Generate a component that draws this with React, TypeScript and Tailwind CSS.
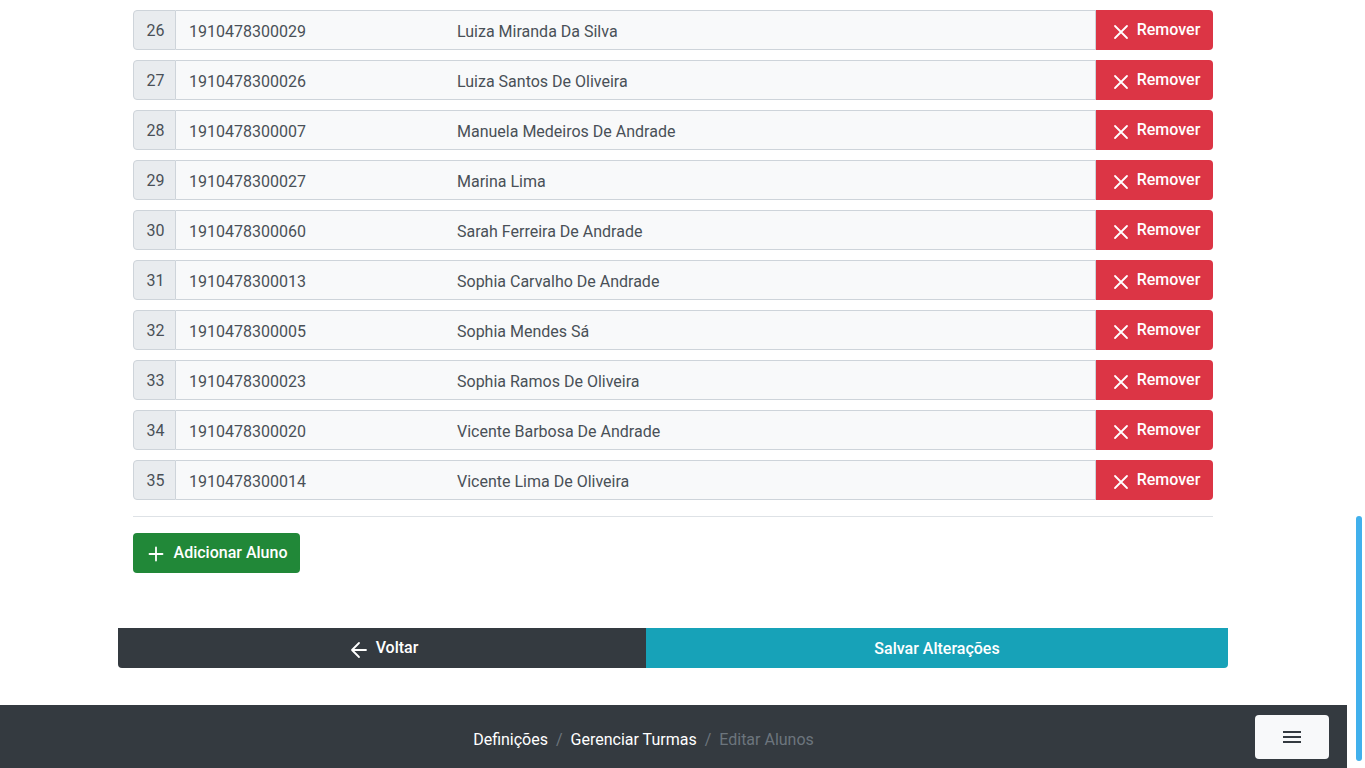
import React from "react";

const alunos = [
  { n: 26, code: "1910478300029", name: "Luiza Miranda Da Silva" },
  { n: 27, code: "1910478300026", name: "Luiza Santos De Oliveira" },
  { n: 28, code: "1910478300007", name: "Manuela Medeiros De Andrade" },
  { n: 29, code: "1910478300027", name: "Marina Lima" },
  { n: 30, code: "1910478300060", name: "Sarah Ferreira De Andrade" },
  { n: 31, code: "1910478300013", name: "Sophia Carvalho De Andrade" },
  { n: 32, code: "1910478300005", name: "Sophia Mendes Sá" },
  { n: 33, code: "1910478300023", name: "Sophia Ramos De Oliveira" },
  { n: 34, code: "1910478300020", name: "Vicente Barbosa De Andrade" },
  { n: 35, code: "1910478300014", name: "Vicente Lima De Oliveira" },
];

const XIcon = () => (
  <svg width="16" height="16" viewBox="0 0 16 16" fill="none" stroke="currentColor" strokeWidth="1.8" strokeLinecap="round">
    <path d="M2 2L14 14M14 2L2 14" />
  </svg>
);

const PlusIcon = () => (
  <svg width="16" height="16" viewBox="0 0 16 16" fill="none" stroke="currentColor" strokeWidth="1.8" strokeLinecap="round">
    <path d="M8 1.5V14.5M1.5 8H14.5" />
  </svg>
);

const ArrowLeftIcon = () => (
  <svg width="18" height="18" viewBox="0 0 18 18" fill="none" stroke="currentColor" strokeWidth="1.8" strokeLinecap="round" strokeLinejoin="round">
    <path d="M16 9H2M9 2L2 9L9 16" />
  </svg>
);

const MenuIcon = () => (
  <svg width="20" height="14" viewBox="0 0 20 14" fill="none" stroke="currentColor" strokeWidth="2">
    <path d="M1 2H19M1 7H19M1 12H19" />
  </svg>
);

export default function App() {
  return (
    <div className="w-[1365px] h-[768px] flex overflow-hidden bg-white font-['Roboto','Liberation_Sans',sans-serif]">
      <div className="w-[1347px] flex flex-col h-full">
        <div className="flex-1 pt-[10px]">
          <div className="w-[1110px] ml-[118px] px-[15px]">
            <div className="flex flex-col gap-[10px]">
              {alunos.map((a) => (
                <div key={a.n} className="flex h-10">
                  <div className="w-[43px] flex items-center justify-center bg-[#e9ecef] border border-[#ced4da] rounded-l text-[16px] text-[#495057] pt-[2px] pl-[2px]">
                    {a.n}
                  </div>
                  <div className="flex-1 flex items-center bg-[#f8f9fa] border border-l-0 border-[#ced4da] pl-[13px] text-[16px] text-[#495057] pt-[3px]">
                    <span className="w-[268px]">{a.code}</span>
                    <span>{a.name}</span>
                  </div>
                  <button className="w-[117px] flex items-center justify-center gap-2 bg-[#dc3545] text-white rounded-r text-[16px] font-medium pl-[4px]">
                    <span className="pt-[3px]"><XIcon /></span>
                    Remover
                  </button>
                </div>
              ))}
            </div>
            <div className="mt-4 border-t border-[#dee2e6]" />
            <button className="mt-4 h-10 w-[167px] flex items-center justify-center gap-[10px] bg-[#218838] text-white rounded text-[16px] font-medium pl-[2px]">
              <span className="pt-[2px]"><PlusIcon /></span>
              Adicionar Aluno
            </button>
          </div>
          <div className="w-[1110px] ml-[118px] mt-[55px] flex h-10">
            <button className="w-[528px] flex items-center justify-center gap-2 bg-[#343a40] text-white rounded-bl text-[16px] font-medium pl-[4px]">
              <span className="pt-[3px]"><ArrowLeftIcon /></span>
              Voltar
            </button>
            <button className="flex-1 flex items-center justify-center bg-[#17a2b8] text-white rounded-br text-[16px] font-medium pt-[2px]">
              Salvar Alterações
            </button>
          </div>
        </div>
        <footer className="h-[63px] bg-[#343a40] flex items-center">
          <div className="flex-1 flex justify-center items-center text-[16px] pt-[6px]">
            <div className="flex items-center gap-2 ml-[32px]">
              <span className="text-white">Definições</span>
              <span className="text-[#6c757d]">/</span>
              <span className="text-white">Gerenciar Turmas</span>
              <span className="text-[#6c757d]">/</span>
              <span className="text-[#6c757d]">Editar Alunos</span>
            </div>
          </div>
          <button className="mr-[18px] w-[74px] h-11 bg-[#f8f9fa] rounded flex items-center justify-center text-[#343a40]">
            <MenuIcon />
          </button>
        </footer>
      </div>
      <div className="w-[18px] h-full flex justify-center">
        <div className="mt-[516px] w-[6px] h-[245px] rounded-full bg-[#41b0ec] ml-[6px]" />
      </div>
    </div>
  );
}
